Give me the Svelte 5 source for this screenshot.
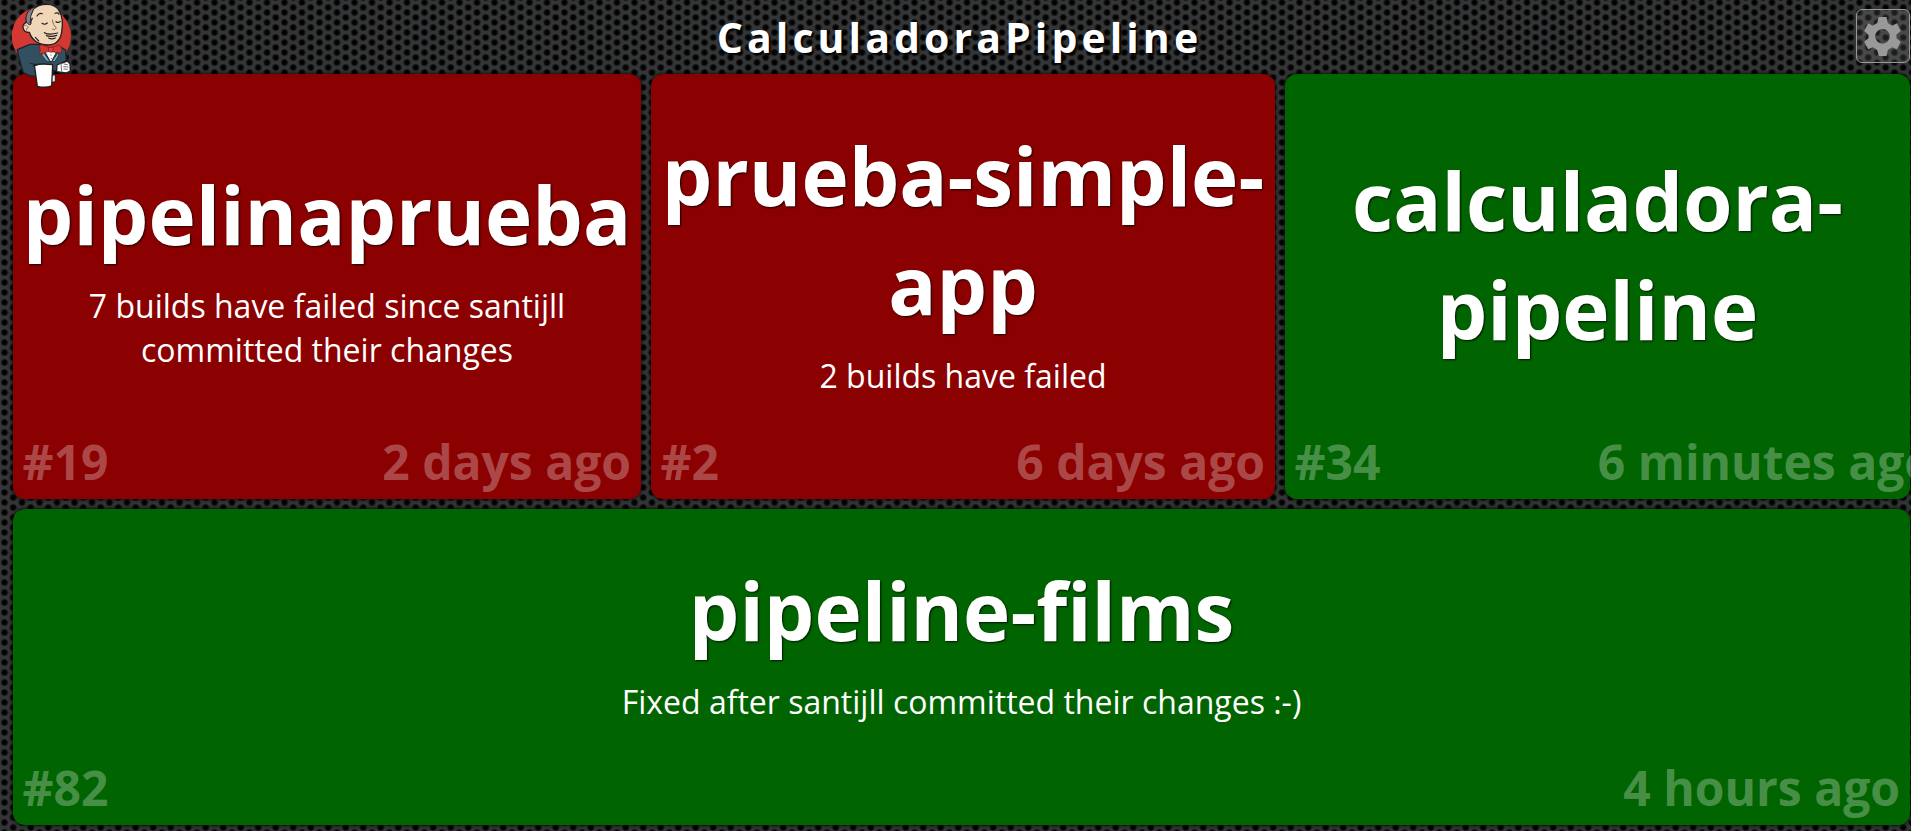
<script>
  const rows = [
    [
      { name: 'pipelinaprueba', note: '7 builds have failed since santijll committed their changes', build: '#19', time: '2 days ago', state: 'failing' },
      { name: 'prueba-simple-app', note: '2 builds have failed', build: '#2', time: '6 days ago', state: 'failing' },
      { name: 'calculadora-pipeline', note: '', build: '#34', time: '6 minutes ago', state: 'passing' }
    ],
    [{ name: 'pipeline-films', note: 'Fixed after santijll committed their changes :-)', build: '#82', time: '4 hours ago', state: 'passing' }]
  ];
</script>

<div class="monitor">
  <svg class="mesh" aria-hidden="true">
    <defs>
      <radialGradient id="hole">
        <stop offset="0" stop-color="#000" />
        <stop offset=".5" stop-color="#040404" />
        <stop offset="1" stop-color="#343536" />
      </radialGradient>
      <pattern id="grid" width="17.5" height="10" patternUnits="userSpaceOnUse">
        <rect width="18" height="10" fill="#343536" />
        <circle cx="4.5" cy="2.5" r="4.2" fill="url(#hole)" />
        <circle cx="4.5" cy="12.5" r="4.2" fill="url(#hole)" />
        <circle cx="13.2" cy="7.5" r="4.2" fill="url(#hole)" />
        <circle cx="13.2" cy="-2.5" r="4.2" fill="url(#hole)" />
      </pattern>
    </defs>
    <rect width="100%" height="100%" fill="url(#grid)" />
  </svg>

  <header>
    <svg class="butler" viewBox="33 0 180 264" aria-hidden="true" stroke-linejoin="round" stroke-linecap="round">
      <circle cx="124" cy="109" r="89" fill="#d33833" />
      <path d="M90 133 52 149 55 166 70 218 88 227 110 229 120 205 180 215 199 178 197 150 178 139 150 150 118 133Z" fill="#335061" stroke="#1b242a" stroke-width="4" />
      <path d="M133 153 153 188 170 156 152 150Z" fill="#fff" stroke="#1b242a" stroke-width="3" />
      <path d="M130 157 151 187 139 182 126 166Zm45 0-20 29 10-2 11-18Z" fill="#81b0c4" stroke="#1b242a" stroke-width="2" />
      <path d="M103 25C119 10 161 6 176 30c11 17 13 44 9 66-4 26-20 38-40 39-25 0-48-11-57-38-20 1-26-23-9-30C77 47 82 33 103 25Z" fill="#f0d6b7" stroke="#231f20" stroke-width="4" />
      <path d="M108 20C86 25 74 44 79 66l9 9 5-3-1-23 8-20Z" fill="#827f86" stroke="#231f20" stroke-width="3" />
      <path d="M72 77q9-5 13 6-8 0-5 8" fill="none" stroke="#9b7564" stroke-width="3" />
      <path d="M90 67 97 55M111 48q6-11 16-7M165 40q9-4 12 3M126 70q8 6 16-1M168 65q7 5 13-1" fill="none" stroke="#231f20" stroke-width="3.5" />
      <path d="M157 60q1 15 12 24-2 7-11 4" fill="none" stroke="#8c6a58" stroke-width="3" />
      <path d="M133 98q13 8 40 1M139 107q15 5 31-1M146 114q8 5 20 0M106 112l10 11" fill="none" stroke="#231f20" stroke-width="3.5" />
      <path d="M118 138q5-5 10-3l20 8 8-1 22-7q8 2 7 23-17 1-28-3l-10-1-28 9q4-13-1-25Z" fill="#d33833" stroke="#7a1715" stroke-width="2" />
      <path d="M147 143q7-3 12 0l-1 13q-6 2-11-1Z" fill="#e8453f" stroke="#7a1715" stroke-width="2" />
      <path d="M153 165v.1M154 175v.1" stroke="#231f20" stroke-width="3" />
      <path d="m171 195 14-6 17-6 8 8 1 22-13 6-28-4Z" fill="#fff" stroke="#231f20" stroke-width="4" />
      <path d="m183 190 2 24M192 192l10 2m-11 6 13 1m-12 6 10 1" fill="none" stroke="#555" stroke-width="2.5" />
      <path d="M155 225h11v20l-12 2Z" fill="#eee" stroke="#231f20" stroke-width="3" />
      <path d="M103 194q27-4 55 0l-3 64q-19 7-43 1Z" fill="#fff" stroke="#231f20" stroke-width="4" />
      <path d="m91 190 22 5-14 3" fill="none" stroke="#1b242a" stroke-width="3" />
    </svg>
    <h1>CalculadoraPipeline</h1>
    <button aria-label="Settings">
      <svg viewBox="160 48 110 117" aria-hidden="true">
        <path fill-rule="evenodd" d="M204 48H227L231 66 244 74 258 67 270 90 257 101V112L270 122 258 145 244 139 231 147 227 165H204L199 147 186 139 172 145 160 122 173 112V101L160 90 172 67 186 74 199 66ZM215 84a22 22 0 1 0 0 44 22 22 0 0 0 0-44Z" />
      </svg>
    </button>
  </header>

  <main>
    {#each rows as row, i}
      <div class="row row-{i}">
        {#each row as job}
          <section class="job {job.state}">
            <div class="summary">
              <h2>{job.name}</h2>
              {#if job.note}<p>{job.note}</p>{/if}
            </div>
            <footer><span>{job.build}</span><span>{job.time}</span></footer>
          </section>
        {/each}
      </div>
    {/each}
  </main>
</div>

<style>
  :global(body) { overflow: hidden; background: #2f3031; }
  .monitor { position: relative; height: 831px; overflow: hidden; box-sizing: border-box; display: flex; flex-direction: column; font-family: 'Open Sans', 'Noto Sans', sans-serif; color: #fff; }
  .mesh { position: absolute; inset: 0; width: 100%; height: 100%; z-index: -1; }
  header { height: 74px; display: grid; grid-template-columns: 66px 1fr 54px; padding: 0 1px 0 11px; box-sizing: border-box; position: relative; z-index: 1; }
  .butler { width: 60px; height: 88px; overflow: visible; }
  h1 { margin: 0; padding: 10px 14px 0 0; font-size: 41px; line-height: 54px; letter-spacing: 4.07px; text-align: center; text-shadow: 2px 2px 2px #000; }
  button { width: 54px; height: 54px; margin-top: 9px; border: 1px solid #97989a; border-radius: 6px; background: rgba(255, 255, 255, .1); padding: 6px 7px; }
  button svg { display: block; width: 37px; height: 39px; fill: #999; }
  main { display: flex; flex-direction: column; gap: 10px; padding: 0 1px 0 13px; }
  .row { display: grid; gap: 10px; }
  .row-0 { grid-template-columns: 628px 624px 625px; height: 425px; }
  .row-1 { grid-template-columns: 1fr; height: 316px; }
  .job { display: flex; flex-direction: column; border-radius: 12px; box-shadow: 0 0 4px #000; }
  .failing { background: #8b0000; }
  .passing { background: #006400; }
  .summary { flex: 1; display: flex; flex-direction: column; justify-content: center; align-items: center; text-align: center; padding: 2px 10px 0; }
  .row-0 .job:first-child .summary { padding-top: 14px; }
  h2 { margin: 0; font-size: 80px; line-height: 109px; text-shadow: 1px 1px 2px rgba(0, 0, 0, .8); }
  p { margin: 16px 0 -10px; max-width: 800px; font-size: 32px; line-height: 43.5px; }
  footer { display: flex; justify-content: space-between; padding: 0 10px 0 9.6px; height: 67px; line-height: 59px; font-size: 48px; font-weight: 700; color: rgba(255, 255, 255, .3); white-space: nowrap; }
  .row-0 .job:last-child footer { padding-right: 0; margin-right: -24px; }
</style>
